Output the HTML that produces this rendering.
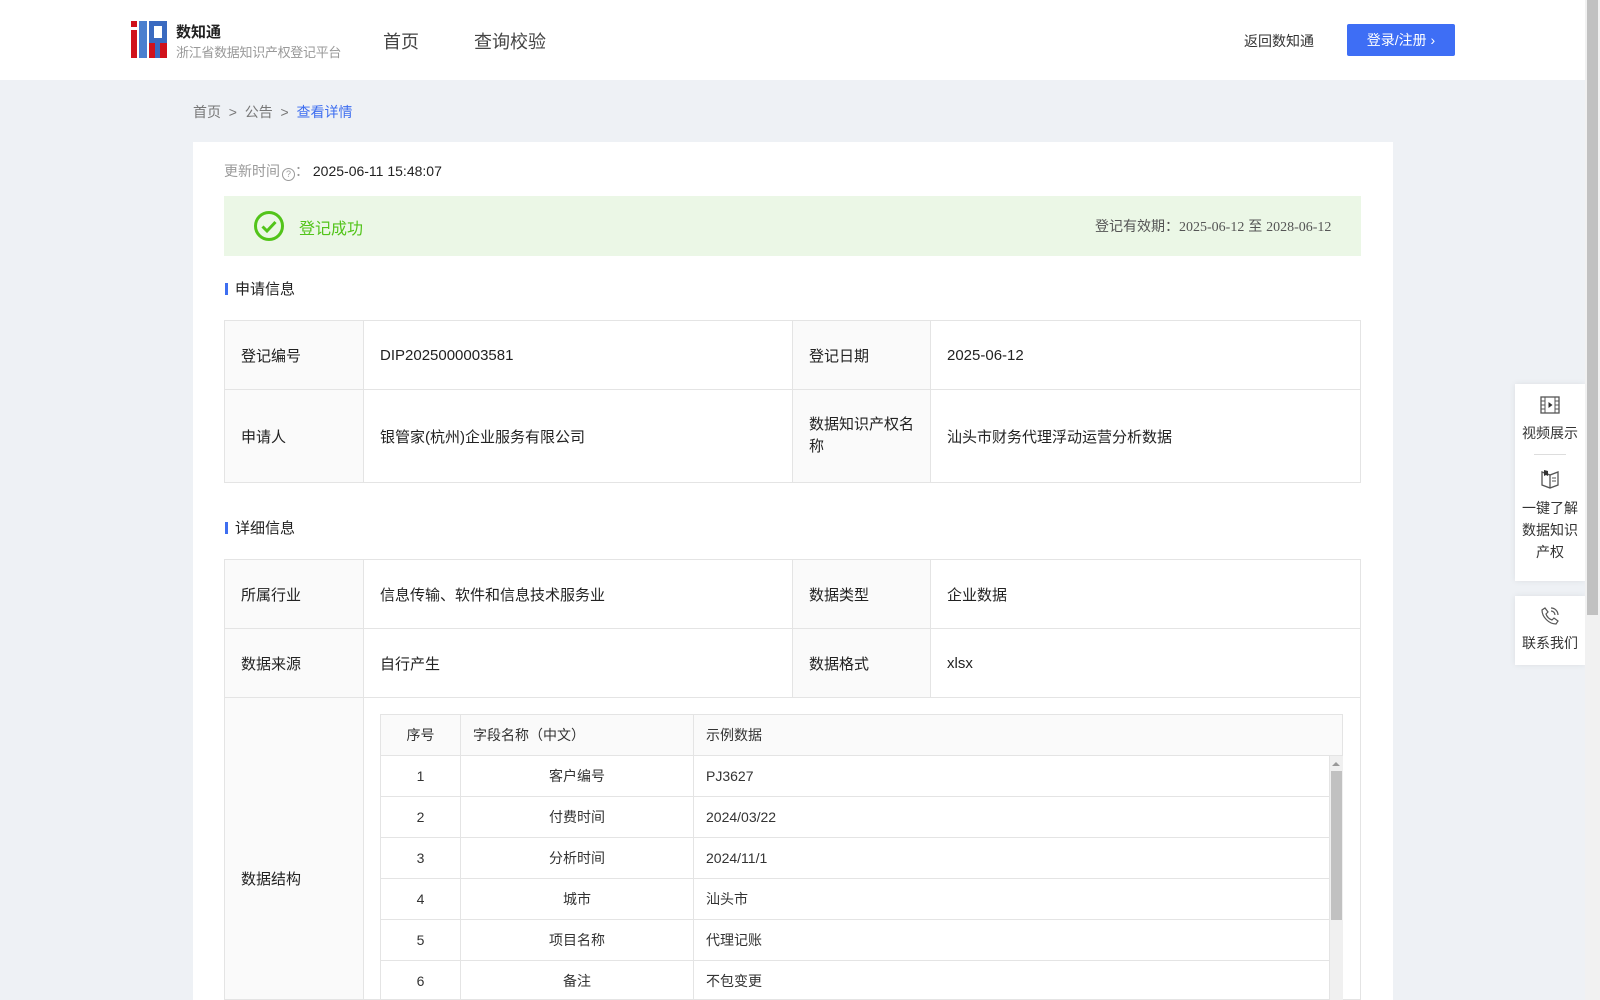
<!DOCTYPE html>
<html style="height:1000px;overflow:hidden"><head><meta charset="utf-8"><style>
*{margin:0;padding:0;box-sizing:border-box}
body{width:1600px;height:1000px;overflow:hidden;background:#eef1f5;font-family:"Liberation Sans","Noto Sans CJK SC",sans-serif;color:#333;position:relative}
.abs{position:absolute}
.hdr{left:0;top:0;width:1585px;height:80px;background:#fff}
.sb{left:1585px;top:0;width:15px;height:1000px;background:#f1f1f1}
.sbt{left:1587px;top:0;width:11px;height:615px;background:#c1c1c1}
.card{left:193px;top:142px;width:1200px;height:858px;background:#fff}
table{border-collapse:collapse;position:absolute;font-size:15px;color:#222}
td{border:1px solid #e4e4e4;padding:0 16px;vertical-align:middle}
td.l{background:#fafafa}
.sec{font-size:15px;color:#222}
.sec:before{content:"";position:absolute;left:-10px;top:5px;width:3px;height:12px;background:#3e6ef0}
.it td{font-size:14px;color:#333;height:41px;border-color:#e4e4e4}
.side{background:#fff;box-shadow:0 0 6px rgba(0,0,0,.08);text-align:center;font-size:14px;color:#333;line-height:22px}
.wrap{position:absolute;left:0;top:0;width:1600px;height:1000px;overflow:hidden}
</style></head><body><div class="wrap">
<div class="abs hdr"></div>
<svg class="abs" style="left:131px;top:21px" width="36" height="37" viewBox="0 0 36 37">
<rect x="0" y="0" width="6" height="6" fill="#d0121b"/><rect x="0" y="9" width="6" height="28" fill="#d0121b"/>
<rect x="8" y="0" width="8" height="37" fill="#4a7fcf"/><rect x="18" y="0" width="18" height="37" fill="#3a6ac0"/>
<rect x="23" y="5" width="8" height="12" fill="#fff"/><rect x="18" y="22" width="6" height="15" fill="#d0121b"/><rect x="29" y="22" width="7" height="15" fill="#d0121b"/>
</svg>
<div class="abs" style="left:176px;top:21px;font-size:15px;font-weight:bold;color:#222">数知通</div>
<div class="abs" style="left:176px;top:42px;font-size:13px;color:#999;letter-spacing:-0.3px">浙江省数据知识产权登记平台</div>
<div class="abs" style="left:383px;top:28px;font-size:18px;color:#444">首页</div>
<div class="abs" style="left:474px;top:28px;font-size:18px;color:#444">查询校验</div>
<div class="abs" style="left:1244px;top:31px;font-size:14px;color:#333">返回数知通</div>
<div class="abs" style="left:1347px;top:24px;width:108px;height:32px;background:#3e6ef5;border-radius:2px;color:#fff;font-size:14px;line-height:32px;text-align:center">登录/注册 ›</div>
<div class="abs" style="left:193px;top:102px;font-size:14px;color:#777">首页 &nbsp;&gt;&nbsp; 公告 &nbsp;&gt;&nbsp; <span style="color:#3e6ef0">查看详情</span></div>
<div class="abs card"></div>
<div class="abs" style="left:224px;top:161px;font-size:14px;color:#999">更新时间<span style="display:inline-block;width:13px;height:13px;border:1px solid #999;border-radius:50%;font-size:9px;line-height:11px;text-align:center;vertical-align:-1px;margin-left:2px">?</span>： <span style="color:#222">2025-06-11 15:48:07</span></div>
<div class="abs" style="left:224px;top:196px;width:1137px;height:60px;background:#ebf7e6"></div>
<svg class="abs" style="left:253px;top:210px" width="32" height="32" viewBox="0 0 32 32"><circle cx="16" cy="16" r="13.5" fill="none" stroke="#52c41a" stroke-width="3"/><path d="M9.5 16.5l4.5 4.5 8.5-9" fill="none" stroke="#52c41a" stroke-width="3"/></svg>
<div class="abs" style="left:299px;top:215px;font-size:16px;color:#52c41a">登记成功</div>
<div class="abs" style="left:1095px;top:216px;font-size:14px;color:#555">登记有效期：<span style="font-family:'Liberation Serif',serif">2025-06-12</span> 至 <span style="font-family:'Liberation Serif',serif">2028-06-12</span></div>
<div class="abs sec" style="left:235px;top:278px">申请信息</div>
<table style="left:224px;top:320px;width:1137px">
<tr style="height:69px"><td class="l" style="width:139px">登记编号</td><td style="width:429px">DIP2025000003581</td><td class="l" style="width:138px">登记日期</td><td>2025-06-12</td></tr>
<tr style="height:93px"><td class="l">申请人</td><td>银管家(杭州)企业服务有限公司</td><td class="l" style="line-height:22px">数据知识产权名称</td><td>汕头市财务代理浮动运营分析数据</td></tr>
</table>
<div class="abs sec" style="left:235px;top:517px">详细信息</div>
<table style="left:224px;top:559px;width:1137px">
<tr style="height:69px"><td class="l" style="width:139px">所属行业</td><td style="width:429px">信息传输、软件和信息技术服务业</td><td class="l" style="width:138px">数据类型</td><td>企业数据</td></tr>
<tr style="height:69px"><td class="l">数据来源</td><td>自行产生</td><td class="l">数据格式</td><td>xlsx</td></tr>
<tr style="height:302px"><td class="l"></td><td colspan="3"></td></tr>
</table>
<div class="abs" style="left:241px;top:868px;font-size:15px;color:#222">数据结构</div>
<div class="abs" style="left:380px;top:714px;width:963px;height:286px;overflow:hidden">
<table class="it" style="left:0;top:0;width:963px">
<tr style="background:#fafafa"><td style="width:80px;text-align:center">序号</td><td style="width:233px;padding-left:12px">字段名称（中文）</td><td style="padding-left:12px">示例数据</td></tr>
<tr><td style="text-align:center">1</td><td style="text-align:center">客户编号</td><td style="padding-left:12px">PJ3627</td></tr>
<tr><td style="text-align:center">2</td><td style="text-align:center">付费时间</td><td style="padding-left:12px">2024/03/22</td></tr>
<tr><td style="text-align:center">3</td><td style="text-align:center">分析时间</td><td style="padding-left:12px">2024/11/1</td></tr>
<tr><td style="text-align:center">4</td><td style="text-align:center">城市</td><td style="padding-left:12px">汕头市</td></tr>
<tr><td style="text-align:center">5</td><td style="text-align:center">项目名称</td><td style="padding-left:12px">代理记账</td></tr>
<tr><td style="text-align:center">6</td><td style="text-align:center">备注</td><td style="padding-left:12px">不包变更</td></tr>
</table></div>
<div class="abs" style="left:1329px;top:756px;width:14px;height:244px;background:#f0f0f0;border-left:1px solid #e4e4e4"></div>
<div class="abs" style="left:1331px;top:771px;width:11px;height:149px;background:#c1c1c1"></div>
<div class="abs" style="left:1332px;top:762px;width:0;height:0;border:4px solid transparent;border-bottom:4px solid #999;border-top:0"></div>
<div class="abs side" style="left:1515px;top:384px;width:70px;height:197px">
<svg style="margin-top:12px" width="20" height="18" viewBox="0 0 20 18"><rect x="1" y="1" width="18" height="16" fill="none" stroke="#555" stroke-width="1.3"/><path d="M5 1v16M15 1v16M1 5h4M1 9h4M1 13h4M15 5h4M15 9h4M15 13h4" stroke="#555" stroke-width="1"/><path d="M8.5 6v6l4-3z" fill="#333"/></svg>
<div style="margin-top:2px">视频展示</div>
<div style="width:32px;height:1px;background:#ddd;margin:10px auto 14px"></div>
<svg width="20" height="20" viewBox="0 0 20 20"><path d="M2 3v13l8 3 8-3V3l-8 3z M10 6v13" fill="none" stroke="#555" stroke-width="1.3"/><path d="M4 1v6l2-1 2 1V2z" fill="#333"/><path d="M12 9h4M12 12h4" stroke="#555" stroke-width="1"/></svg>
<div style="margin-top:2px">一键了解<br>数据知识<br>产权</div>
</div>
<div class="abs side" style="left:1515px;top:596px;width:70px;height:69px">
<svg style="margin-top:10px" width="20" height="20" viewBox="0 0 20 20"><path d="M5 2l3 4-2 2c1 3 3 5 6 6l2-2 4 3-2 3C9 18 2 11 2 4z" fill="none" stroke="#555" stroke-width="1.2"/><path d="M11 5a4 4 0 0 1 4 4M11 2a7 7 0 0 1 7 7" fill="none" stroke="#555" stroke-width="1.2"/></svg>
<div>联系我们</div>
</div>
<div class="abs sb"></div><div class="abs sbt"></div>
</div></body></html>
